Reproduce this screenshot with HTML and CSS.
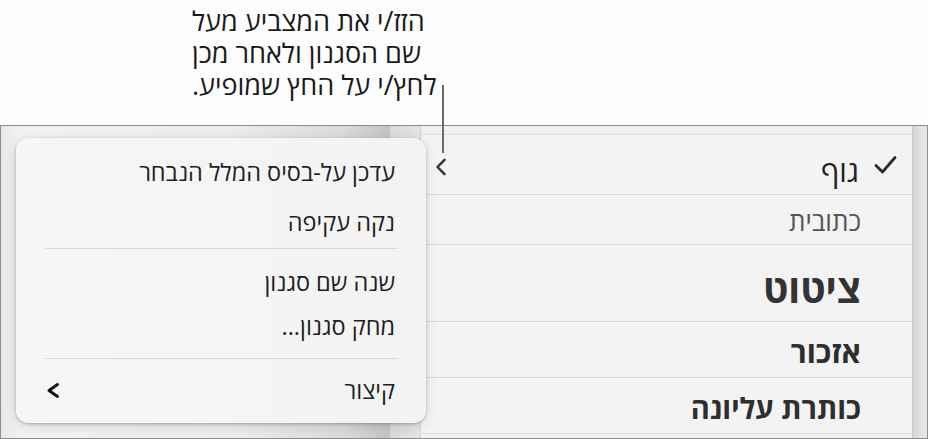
FILE: index.html
```html
<!DOCTYPE html>
<html lang="he">
<head>
  <meta charset="UTF-8" />
  <meta name="viewport" content="width=device-width, initial-scale=1" />
  <title>סגנונות פסקה</title>
  <link rel="stylesheet" href="styles.css">
</head>
<body>
  <div class="callout">
    <p class="callout-text" dir="rtl">הזז/י את המצביע מעל<br>שם הסגנון ולאחר מכן<br>לחץ/י על החץ שמופיע.</p>
    <div class="callout-line"></div>
  </div>

  <div class="window">
    <div class="side"></div>
    <div class="gutter"></div>

    <div class="styles" dir="rtl">
      <div class="row row-cut"></div>
      <div class="row row-body">
        <span class="check">
          <svg width="23" height="20" viewBox="0 0 23 20"><path d="M2 10.5 L8.5 17 L21 2.5" fill="none" stroke="#2b2b2b" stroke-width="2.8" stroke-linecap="round" stroke-linejoin="round"/></svg>
        </span>
        <span class="name">גוף</span>
        <span class="arrow">
          <svg width="12" height="18" viewBox="0 0 12 18"><path d="M9.5 1.8 L2.5 9 L9.5 16.2" fill="none" stroke="#333" stroke-width="2.5" stroke-linecap="round" stroke-linejoin="round"/></svg>
        </span>
      </div>
      <div class="row row-caption"><span class="name">כתובית</span></div>
      <div class="row row-quote"><span class="name">ציטוט</span></div>
      <div class="row row-mention"><span class="name">אזכור</span></div>
      <div class="row row-header"><span class="name">כותרת עליונה</span></div>
      <div class="row row-rest"></div>
    </div>

    <div class="scroll"></div>

    <div class="popover" dir="rtl">
      <div class="item big">עדכן על-בסיס המלל הנבחר</div>
      <div class="item big">נקה עקיפה</div>
      <div class="sep sep-1"></div>
      <div class="item">שנה שם סגנון</div>
      <div class="item">מחק סגנון...</div>
      <div class="sep sep-2"></div>
      <div class="item item-sub">
        <span>קיצור</span>
        <svg width="13" height="15" viewBox="0 0 13 15"><path d="M10.5 1.5 L2 7.5 L10.5 13.5" fill="none" stroke="#111" stroke-width="2.8" stroke-linecap="round" stroke-linejoin="round"/></svg>
      </div>
    </div>
  </div>
</body>
</html>
```

FILE: styles.css
```css
body {
  margin: 0;
  width: 928px;
  height: 439px;
  overflow: hidden;
  background: #fdfdfd;
  font-family: 'Open Sans', 'Liberation Sans', sans-serif;
  color: #1c1c1c;
}
.callout {
  position: relative;
  height: 125px;
}
.callout-text {
  margin: 0 0 0 192px;
  padding-top: 5px;
  width: 270px;
  font-size: 27px;
  line-height: 32px;
  text-align: left;
  color: #1a1a1a;
}
.callout-line {
  position: absolute;
  left: 442px;
  top: 85px;
  width: 2px;
  height: 68px;
  background: #6a6a6a;
  z-index: 5;
}
.window {
  position: relative;
  height: 312px;
  border: 1px solid #8c8c8c;
  display: flex;
}
.side {
  width: 389px;
  background: linear-gradient(to right, #e9e9e9 0%, #f2f2f2 6%, #ececec 60%, #dadada 88%, #c3c3c3 100%);
}
.gutter {
  width: 30px;
  background: linear-gradient(to right, #d9d9d9, #e4e4e4);
  border-right: 1px solid #d2d2d2;
}
.styles {
  flex: 1;
  background: #f3f3f3;
}
.row {
  display: flex;
  align-items: center;
  padding-right: 51px;
  border-bottom: 1px solid #dadada;
  box-sizing: border-box;
}
.row-cut { height: 9px; background: #f0f0f0; }
.row-body {
  height: 60px;
  padding-right: 15px;
  padding-left: 14px;
  padding-top: 11px;
}
.check {
  width: 38px;
  display: flex;
  justify-content: flex-start;
  margin-bottom: 11px;
}
.row-body .name {
  font-size: 30px;
  color: #222;
}
.arrow {
  margin-right: auto;
  display: flex;
  margin-bottom: 6px;
}
.row-caption { height: 50px; padding-top: 3px; }
.row-caption .name {
  font-size: 26px;
  color: #555;
}
.row-quote { height: 77px; padding-top: 8px; }
.row-quote .name {
  font-size: 39px;
  font-weight: bold;
  color: #333;
}
.row-mention { height: 56px; padding-top: 4px; }
.row-mention .name {
  font-size: 30px;
  font-weight: bold;
  color: #2e2e2e;
}
.row-header { height: 56px; padding-top: 3px; }
.row-header .name {
  font-size: 29px;
  font-weight: bold;
  color: #2e2e2e;
}
.row-rest { border-bottom: none; }
.scroll {
  width: 14px;
  border-left: 1px solid #c9c9c9;
  background: linear-gradient(to right, #d6d6d6, #e9e9e9);
}
.popover {
  position: absolute;
  left: 15px;
  top: 12px;
  width: 410px;
  height: 285px;
  box-sizing: border-box;
  padding: 9px 31px 9px 28px;
  background: linear-gradient(to right, #f6f6f6, #f3f3f3);
  border-radius: 13px;
  box-shadow: 0 1px 3px rgba(0,0,0,0.25), 0 3px 12px rgba(0,0,0,0.12);
  font-size: 23.5px;
  color: #1e1e1e;
}
.item {
  height: 44px;
  display: flex;
  align-items: center;
}
.item.big { height: 50px; }
.sep {
  height: 1px;
  background: #d8d8d8;
  margin-left: 1px;
  margin-right: -3px;
}
.sep-1 { margin-top: 1px; margin-bottom: 11px; }
.sep-2 { margin-top: 10px; margin-bottom: 9px; }
.item-sub {
  justify-content: space-between;
}
.item-sub svg { margin-left: 3px; }
```
